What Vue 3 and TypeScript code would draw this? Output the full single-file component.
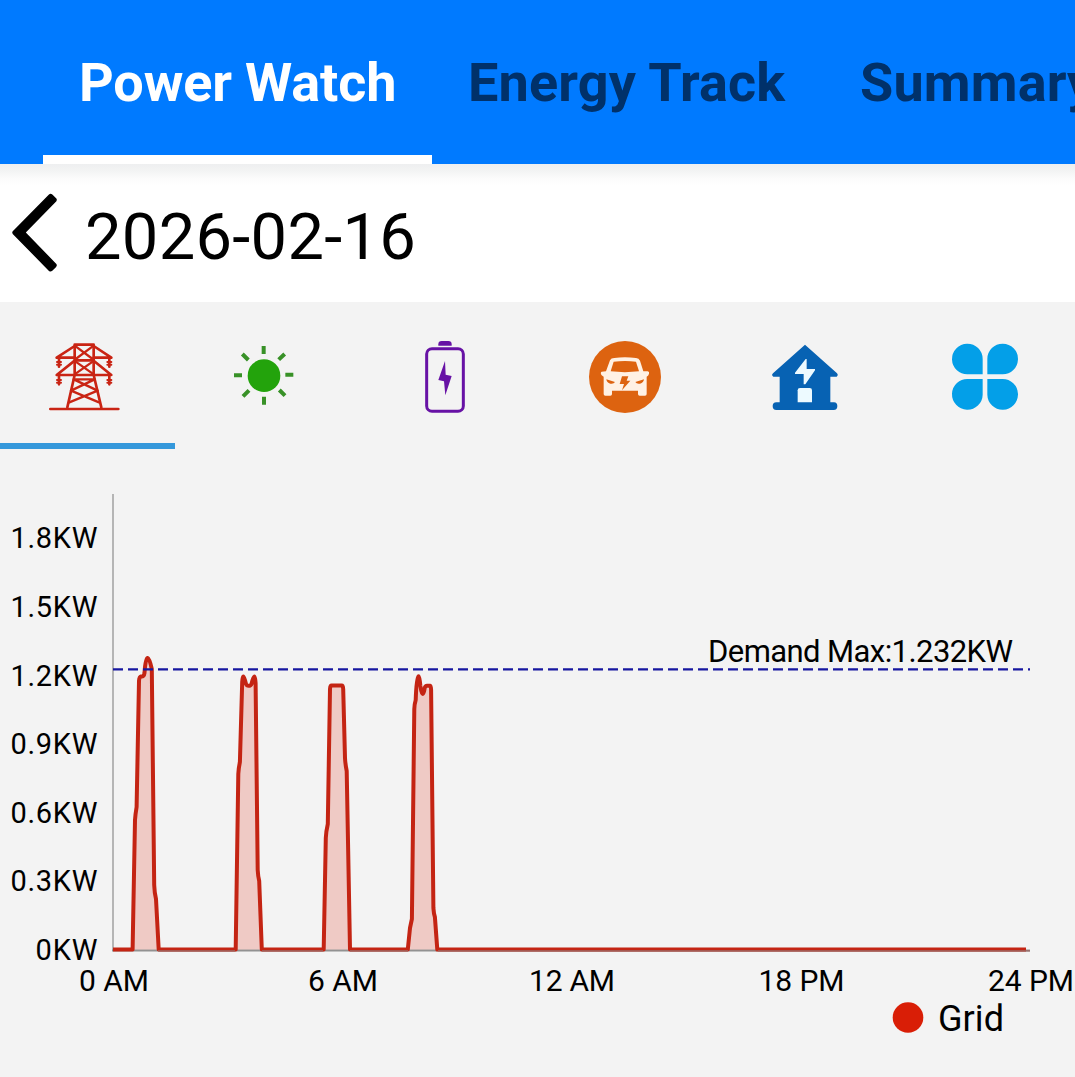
<script setup lang="ts">
interface AxisLabel { text: string; pos: number; width: number }

const tabs = [
  { label: 'Power Watch', active: true },
  { label: 'Energy Track', active: false },
  { label: 'Summary', active: false },
]

const yLabels: AxisLabel[] = [
  { text: '1.8KW', pos: 548, width: 87 },
  { text: '1.5KW', pos: 617, width: 87 },
  { text: '1.2KW', pos: 686, width: 87 },
  { text: '0.9KW', pos: 754, width: 87 },
  { text: '0.6KW', pos: 823, width: 87 },
  { text: '0.3KW', pos: 891, width: 87 },
  { text: '0KW', pos: 960, width: 62 },
]

const xLabels: AxisLabel[] = [
  { text: '0 AM', pos: 114, width: 70 },
  { text: '6 AM', pos: 343, width: 70 },
  { text: '12 AM', pos: 572, width: 86 },
  { text: '18 PM', pos: 801.5, width: 86 },
  { text: '24 PM', pos: 1031, width: 86 },
]

const peaks = [
  'L132.6 949.5 L135 820 Q135.3 815 136.6 807 L139 681 Q139.2 677 141 676.5 Q144 677 144.5 673 Q145.4 658.5 147.5 658 Q149.5 658.5 151.8 669 L154.2 885 Q154.5 893 156 899 L158.7 949.5',
  'L235.7 949.5 L238.3 774 Q238.6 768 239.9 762 L242.2 682 Q242.5 677 243.4 676.5 Q244.4 677 246 684 Q246.8 685.8 248.5 685.8 Q250.8 685.8 251.5 684 Q253 677 254.3 676.5 Q255.3 678 255.6 683 L257.7 870 Q258 876 259.2 881 L261.8 949.5',
  'L323.7 949.5 L325.8 838 Q326 832 327.8 824 L330 689 Q330.2 685.6 331.5 685.6 L341.8 685.6 Q343 685.6 343.2 689 L345 758 Q345.3 764 346.7 771 L350 949.5',
  'L407.8 949.5 L410 928 L411.9 919 L414.3 709 Q414.5 704 415.7 700 Q416.5 678 418.5 676.3 Q419.6 677 420.4 686 Q421.5 694 422.7 694 Q424 693 424.7 688 Q425.3 685.8 427 685.8 L430 685.8 Q431 686 431.1 690 L433.4 908 Q433.8 914 434.9 917 L437.3 949.5',
]
const series = 'M113 949.5 ' + peaks.join(' ')
</script>

<template>
  <main class="screen">
    <nav class="tabs">
      <div v-for="t in tabs" :key="t.label" class="tab" :class="{ active: t.active }"><span>{{ t.label }}</span></div>
    </nav>
    <header class="date-bar">
      <svg class="back" width="50" height="82" viewBox="0 0 50 82">
        <path d="M39.5 3L3.5 39.5Q2.5 40.6 3.5 41.7L39.5 78.4Q40.6 79.2 41.8 78.2L45.6 74.4Q46.5 73.3 45.6 72.2L14.8 40.6L45.6 9Q46.5 7.8 45.6 6.8L41.8 3Q40.6 2 39.5 3Z" stroke="#000" stroke-width="1.5" stroke-linejoin="round" />
      </svg>
      <span class="date">2026-02-16</span>
    </header>

    <section class="sources">
      <svg class="icon" viewBox="0 0 270 270" fill="none" stroke="#c92414" stroke-width="8" stroke-linecap="round" stroke-linejoin="round">
        <path d="M31 237H235" stroke-width="8" />
        <path d="M104 44H161M104 44V135L82 232M161 44V135L184 232M104 91H161M104 135H161" />
        <path d="M104 48L50 83H104M161 48L214 83H161M104 92L50 135H104M161 92L214 135H161" />
        <path d="M107 49L158 87M158 49L107 87M107 95L158 131M158 95L107 131" stroke-width="7" />
        <path d="M101 148H164L93 182L177 217M101 148L173 182L88 217" stroke-width="7" />
        <path d="M57 83V110M208 83V110M57 135V163M208 135V163" />
        <path d="M51 96H63M51 104H63M202 96H214M202 104H214M51 150H63M51 158H63M202 150H214M202 158H214" stroke-width="6" />
      </svg>
      <svg class="icon" viewBox="0 0 270 270">
        <circle cx="132" cy="137" r="49" fill="#23a30c" />
        <path d="M131 48V72M132 200V224M42 136H66M196 134H220M67 72L85 90M194 72L176 89M69 199L87 181M178 180L195 197" stroke="#389127" stroke-width="12" />
      </svg>
      <svg class="icon" viewBox="0 0 270 270">
        <path d="M115 47V43Q115 33 125 33H145Q155 33 155 43V47Z" fill="#6712a5" />
        <rect x="80" y="56" width="110" height="188" rx="16" fill="none" stroke="#6712a5" stroke-width="9" />
        <path d="M135 93L115 150L132 154L136 196L155 138L137 134Z" fill="#6712a5" />
      </svg>
      <svg class="icon" viewBox="0 0 270 270">
        <circle cx="135" cy="141" r="108" fill="#dd6310" />
        <path d="M90 91Q93 84 103 84Q134 80 168 84Q177 85 180 92L190 124L203 124Q209 125 207 131Q206 137 200 140V192Q200 197 195 197H179Q174 197 174 192V182H96V192Q96 197 91 197H76Q71 197 71 192V140L65 136Q60 128 65 125L78 124Z" fill="#fff1e4" />
        <path d="M101 95Q136 91 168 95L177 124Q135 129 92 124Z" fill="#dd6310" />
        <path d="M79 148L105 156Q101 163 91 161Q80 158 79 148ZM192 148L166 156Q170 163 180 161Q191 158 192 148Z" fill="#dd6310" />
        <path d="M126 139H145L140 152H151L126 181L132 162H119Z" fill="#dd6310" />
      </svg>
      <svg class="icon" viewBox="0 0 270 270">
        <path d="M135 44L231 130Q236 136 230 140H211V217H222Q232 218 232 228Q232 240 221 240H49Q38 240 38 228Q38 218 49 217H59V140H40Q33 136 39 130Z" fill="#0762b3" />
        <path d="M137 87L105 128V132H131V163H136L165 121V117H140V87Z" fill="#edfaff" />
        <path d="M113 217V181Q113 174 120 174H149Q156 174 156 181V217Z" fill="#edfaff" />
      </svg>
      <svg class="icon" viewBox="0 0 270 270" fill="#039fe8">
        <path d="M128 133H84A46 46 0 1 1 128 87Z" />
        <path d="M142 133H187A46 46 0 1 0 142 87Z" />
        <path d="M128 147H84A46 46 0 1 0 128 194Z" />
        <path d="M142 147H187A46 46 0 1 1 142 194Z" />
      </svg>
    </section>

    <svg class="chart" width="1075" height="628" viewBox="0 449 1075 628">
      <path d="M113 494V950" stroke="#b5b5b5" stroke-width="2" />
      <path d="M112 950.5H1030" stroke="#929292" stroke-width="2" />
      <path :d="series + ' Z'" fill="#e02a10" fill-opacity=".2" />
      <path :d="series + ' H1026'" fill="none" stroke="#c42413" stroke-width="4" stroke-linejoin="round" />
      <path d="M158 950.9H235M262 950.9H323M350 950.9H408M438 950.9H1030" stroke="#9b6a66" stroke-width="1.2" />
      <path d="M113 669.4H1030" stroke="#1717a0" stroke-width="2.3" stroke-dasharray="10 5" />
      <text x="708" y="662.4" font-size="31" textLength="305" class="label">Demand Max:1.232KW</text>
      <text
        v-for="l in yLabels" :key="l.text" :x="97.5" :y="l.pos" :textLength="l.width"
        text-anchor="end" font-size="29" class="label"
      >{{ l.text }}</text>
      <text
        v-for="l in xLabels" :key="l.text" :x="l.pos" y="991" :textLength="l.width"
        text-anchor="middle" font-size="30" class="label"
      >{{ l.text }}</text>
      <circle cx="908" cy="1017.5" r="15.3" fill="#d91e06" />
      <text x="938" y="1031.4" font-size="36" textLength="66" class="label">Grid</text>
    </svg>
  </main>
</template>

<style>
body { margin: 0; }
</style>

<style scoped>
.screen {
  width: 1075px;
  height: 1077px;
  overflow: hidden;
  background: #f3f3f3;
  font-family: Roboto, "Liberation Sans", sans-serif;
  color: #000;
}
.tabs {
  display: flex;
  height: 164px;
  padding-left: 43px;
  background: #007aff;
  box-sizing: border-box;
  overflow: hidden;
}
.tab {
  flex: none;
  width: 389px;
  height: 164px;
  padding-left: 36px;
  box-sizing: border-box;
  border-bottom: 9px solid transparent;
  color: #00316a;
  font-size: 54px;
  font-weight: 700;
  line-height: 166px;
  letter-spacing: 0.15px;
  white-space: nowrap;
}
.tab + .tab { width: 392px; }
.tab.active { color: #fff; border-bottom-color: #fff; letter-spacing: -0.15px; }
.date-bar {
  display: flex;
  align-items: center;
  height: 138px;
  padding-left: 10px;
  background: linear-gradient(#eeeff0, #f3f4f4 7px, #fcfcfc 15px, #fff 21px);
}
.date {
  margin-left: 25px;
  padding-top: 8px;
  font-size: 65px;
  line-height: 76px;
  letter-spacing: 0.3px;
}
.sources {
  display: flex;
  gap: 90px;
  height: 147px;
  padding: 28px 0 0 40px;
  box-sizing: border-box;
  background: linear-gradient(#3498db, #3498db) 0 100% / 175px 6px no-repeat;
}
.icon { width: 90px; height: 90px; flex: none; }
.chart { display: block; }
.label { font-family: Roboto, "Liberation Sans", sans-serif; fill: #000; }
</style>
